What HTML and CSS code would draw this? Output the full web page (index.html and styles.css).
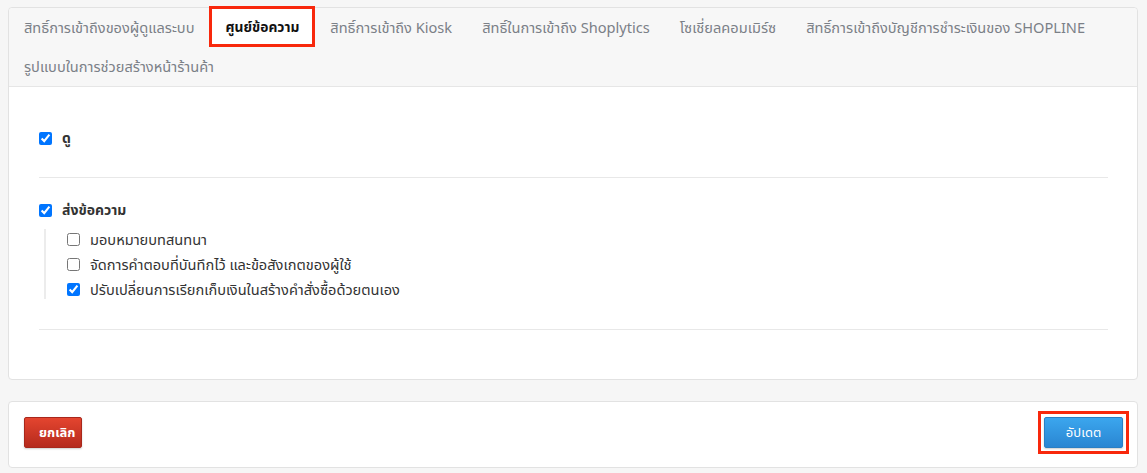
FILE: index.html
```html
<!DOCTYPE html>
<html lang="th">

<head>
    <meta charset="UTF-8">
    <meta name="viewport" content="width=device-width, initial-scale=1.0">
    <title>สิทธิ์การเข้าถึง</title>
    <link rel="stylesheet" href="styles.css">
</head>

<body>
    <div class="panel">
        <ul class="tabs">
            <li><a href="#">สิทธิ์การเข้าถึงของผู้ดูแลระบบ</a></li>
            <li class="active"><a href="#">ศูนย์ข้อความ</a></li>
            <li><a href="#">สิทธิ์การเข้าถึง Kiosk</a></li>
            <li><a href="#">สิทธิ์ในการเข้าถึง Shoplytics</a></li>
            <li><a href="#">โซเชี่ยลคอมเมิร์ซ</a></li>
            <li><a href="#">สิทธิ์การเข้าถึงบัญชีการชำระเงินของ SHOPLINE</a></li>
            <li><a href="#">รูปแบบในการช่วยสร้างหน้าร้านค้า</a></li>
        </ul>
        <div class="panel-body">
            <div class="group first">
                <label class="check main"><input type="checkbox" checked><span>ดู</span></label>
            </div>
            <div class="group">
                <label class="check main"><input type="checkbox" checked><span>ส่งข้อความ</span></label>
                <div class="sub">
                    <label class="check"><input type="checkbox"><span>มอบหมายบทสนทนา</span></label>
                    <label class="check"><input type="checkbox"><span>จัดการคำตอบที่บันทึกไว้ และข้อสังเกตของผู้ใช้</span></label>
                    <label class="check"><input type="checkbox" checked><span>ปรับเปลี่ยนการเรียกเก็บเงินในสร้างคำสั่งซื้อด้วยตนเอง</span></label>
                </div>
            </div>
        </div>
    </div>

    <div class="panel footer">
        <button class="btn btn-cancel">ยกเลิก</button>
        <span class="mark"><button class="btn btn-update">อัปเดต</button></span>
    </div>
</body>

</html>
```

FILE: styles.css
```css
* {
    padding: 0;
    margin: 0;
    list-style: none;
    text-decoration: none;
    box-sizing: border-box;
}

body {
    padding: 7px 9px 0 8px;
    background-color: #f6f6f6;
    font-family: "Noto Sans", "Noto Sans Thai", "Open Sans", sans-serif;
    font-size: 14.6px;
    color: #333;
}

.panel {
    background-color: #fff;
    border: 1px solid #e2e2e2;
    border-radius: 4px;
}

.tabs {
    display: flex;
    flex-wrap: wrap;
    background-color: #f7f7f7;
    border-bottom: 1px solid #e6e6e6;
    border-radius: 4px 4px 0 0;
}

.tabs li {
    height: 39px;
    padding: 0 15px;
    line-height: 39px;
}

.tabs li a {
    color: #7b8087;
    white-space: nowrap;
}

.tabs li.active {
    margin-top: -2px;
    height: 41px;
    padding: 0 13px;
    line-height: 35px;
    background-color: #fff;
    border: 3px solid #f8280c;
}

.tabs li.active a {
    color: #111;
    font-size: 13.8px;
    font-weight: bold;
}

.panel-body {
    padding: 0 29px 49px 30px;
}

.group {
    padding: 22px 0 30px;
    border-bottom: 1px solid #e8e8e8;
}

.group.first {
    padding: 41px 0 29px;
}

.check {
    display: flex;
    align-items: center;
    height: 20px;
    line-height: 20px;
}

.check input {
    width: 13px;
    height: 13px;
    margin: 0 10px 0 0;
}

.check.main span {
    font-size: 14px;
    font-weight: bold;
}

.sub {
    display: flex;
    flex-direction: column;
    gap: 5px;
    margin: 9px 0 0 5px;
    padding-left: 21px;
    border-left: 2px solid #ececec;
}

.footer {
    display: flex;
    justify-content: space-between;
    align-items: flex-start;
    margin-top: 21px;
    height: 67px;
    padding: 15px 15px 0 15px;
}

.btn {
    height: 31px;
    padding: 0 14px;
    font-family: inherit;
    font-size: 13px;
    color: #fff;
    border-radius: 2px;
    cursor: pointer;
    box-shadow: 0 1px 2px rgba(0, 0, 0, .2);
}

.btn-cancel {
    width: 58px;
    font-weight: bold;
    background: linear-gradient(#e4452f, #b52a1d);
    border: 1px solid #a8271b;
}

.btn-update {
    display: block;
    width: 79px;
    background: linear-gradient(#3ba6ee, #2a86d2);
    border: 1px solid #2a7fc4;
}

.mark {
    display: block;
    margin: -6px -7px 0 0;
    padding: 3px;
    border: 3px solid #f8280c;
}
```
